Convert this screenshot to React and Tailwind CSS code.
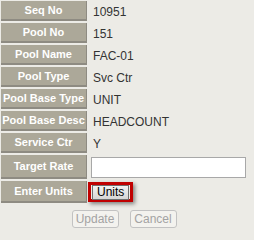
import React from 'react';

const rows = [
  { label: 'Seq No', value: '10951' },
  { label: 'Pool No', value: '151' },
  { label: 'Pool Name', value: 'FAC-01' },
  { label: 'Pool Type', value: 'Svc Ctr' },
  { label: 'Pool Base Type', value: 'UNIT' },
  { label: 'Pool Base Desc', value: 'HEADCOUNT' },
  { label: 'Service Ctr', value: 'Y' },
];

const Label = ({ children }) => (
  <div className="w-[86px] h-full shrink-0 flex items-center justify-center bg-[#aca899] border-b-2 border-r border-[#8e8b82] text-white font-bold text-[11px] leading-none whitespace-nowrap">
    {children}
  </div>
);

export default function App() {
  return (
    <div className="w-[254px] h-[240px] bg-[#ecebe6] pt-[1px] pl-[1px] font-['Liberation_Sans',Arial,sans-serif]">
      <div className="flex flex-col gap-[2px] w-[246px]">
        {rows.map(r => (
          <div key={r.label} className="flex h-[20px] items-center">
            <Label>{r.label}</Label>
            <div className="pl-[6px] text-[12px] text-[#333] leading-none pt-[1px]">{r.value}</div>
          </div>
        ))}
        <div className="flex h-[24px] items-center">
          <Label>Target Rate</Label>
          <div className="pl-[4px] flex-1 flex items-center">
            <input className="w-[155px] h-[21px] bg-white border border-[#a8a8a8] outline-none px-1 text-[12px]" />
          </div>
        </div>
        <div className="flex h-[22px] items-center">
          <Label>Enter Units</Label>
          <div className="ml-[1px] h-[20px] border-[3px] border-[#c00000] shadow-[2px_2px_4px_rgba(0,0,0,0.45)] flex items-center pl-[1px] pr-[1px]">
            <button className="h-[15px] px-[4px] border border-[#6f6f6f] bg-gradient-to-b from-[#f2f2f2] to-[#d6d6d6] text-[12px] leading-none text-black">
              Units
            </button>
          </div>
        </div>
      </div>
      <div className="flex justify-center gap-[11px] mt-[7px] w-[246px]">
        <button disabled className="w-[47px] h-[18px] rounded-[3px] border border-[#c2c2c2] bg-[#f3f2ee] text-[12px] leading-none text-[#a3a3a3]">Update</button>
        <button disabled className="w-[47px] h-[18px] rounded-[3px] border border-[#c2c2c2] bg-[#f3f2ee] text-[12px] leading-none text-[#a3a3a3]">Cancel</button>
      </div>
    </div>
  );
}
